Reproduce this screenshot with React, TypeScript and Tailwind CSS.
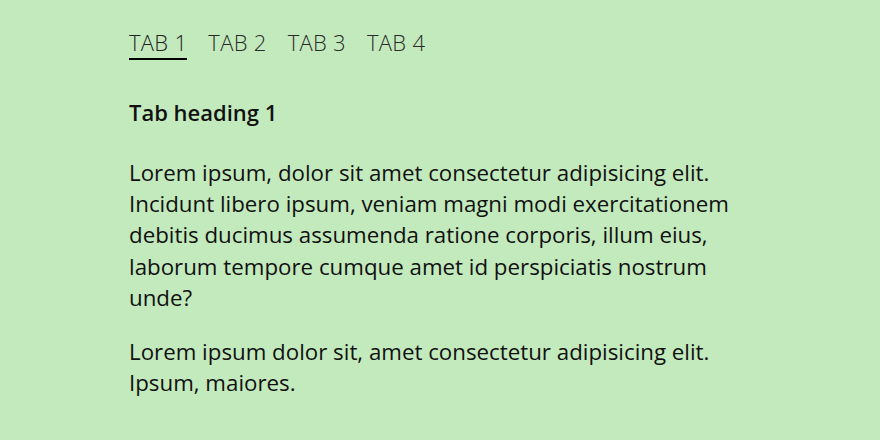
import { useState } from 'react';

const tabs = [
  {
    label: 'TAB 1',
    heading: 'Tab heading 1',
    body: [
      'Lorem ipsum, dolor sit amet consectetur adipisicing elit. Incidunt libero ipsum, veniam magni modi exercitationem debitis ducimus assumenda ratione corporis, illum eius, laborum tempore cumque amet id perspiciatis nostrum unde?',
      'Lorem ipsum dolor sit, amet consectetur adipisicing elit. Ipsum, maiores.',
    ],
  },
  { label: 'TAB 2', heading: 'Tab heading 2', body: ['Lorem ipsum dolor sit amet.'] },
  { label: 'TAB 3', heading: 'Tab heading 3', body: ['Lorem ipsum dolor sit amet.'] },
  { label: 'TAB 4', heading: 'Tab heading 4', body: ['Lorem ipsum dolor sit amet.'] },
];

export default function App() {
  const [active, setActive] = useState(0);
  const tab = tabs[active];

  return (
    <div
      className="min-h-[440px] w-full bg-[#c3eabd] text-[#111] pt-[27px] pl-[129px]"
      style={{ fontFamily: '"Open Sans", sans-serif' }}
    >
      <div className="w-[620px]">
        {/* Tab strip */}
        <div className="flex gap-[21px]">
          {tabs.map((t, i) => (
            <button
              key={t.label}
              onClick={() => setActive(i)}
              className={
                i === active
                  ? 'text-[22px] leading-[30px] font-light text-[#222] border-b-2 border-black pb-[1px] tracking-[0.3px]'
                  : 'text-[22px] leading-[30px] font-light text-[#2a2a2a] border-b-2 border-transparent pb-[1px] tracking-[0.3px]'
              }
            >
              {t.label}
            </button>
          ))}
        </div>

        {/* Panel */}
        <div className="mt-[37px]">
          <h2 className="text-[22px] leading-[30px] font-semibold">{tab.heading}</h2>
          <div className="mt-[30px] flex flex-col gap-[23px]">
            {tab.body.map((p, i) => (
              <p key={i} className="text-[22.3px] leading-[31.2px]">
                {p}
              </p>
            ))}
          </div>
        </div>
      </div>
    </div>
  );
}
